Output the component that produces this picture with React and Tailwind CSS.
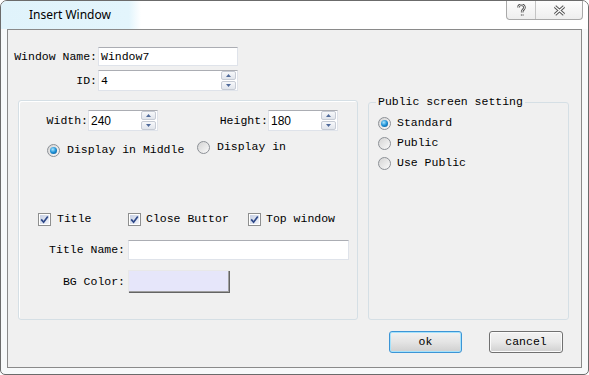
import React from "react";

const mono = "font-['Liberation_Mono','DejaVu_Sans_Mono',monospace] text-[11.5px] text-black";

const Field = ({ width, height = 19, children, className = "" }) => (
  <div
    className={`flex items-center bg-white border border-[#dfe3ea] border-t-[#abadb3] ${className}`}
    style={{ width, height }}
  >
    {children}
  </div>
);

const SpinArrow = ({ up }) => (
  <div className="flex-1 flex items-center justify-center border border-[#c6cbd4] rounded-[2px] bg-linear-to-b from-[#f7f8fa] to-[#e1e5ec]">
    <svg width="5" height="3" viewBox="0 0 5 3">
      <path d={up ? "M0 3 L2.5 0 L5 3 Z" : "M0 0 L5 0 L2.5 3 Z"} fill="#4f6a9a" />
    </svg>
  </div>
);

const SpinBox = ({ width, value, valueClass }) => (
  <Field width={width} height={21}>
    <span className={`flex-1 pl-[2px] ${valueClass}`}>{value}</span>
    <div className="flex flex-col w-[15px] h-[19px] mr-[1px] gap-[1px]">
      <SpinArrow up />
      <SpinArrow />
    </div>
  </Field>
);

const Radio = ({ checked }) => (
  <span className="flex items-center justify-center w-[13px] h-[13px] shrink-0 rounded-full border border-[#8c9096] bg-linear-to-br from-[#d4d4d4] to-[#fafafa]">
    {checked && (
      <span className="block w-[7px] h-[7px] rounded-full bg-[radial-gradient(circle_at_40%_35%,#a9e6ff,#1c8fd4_50%,#0b4c86)]" />
    )}
  </span>
);

const Check = () => (
  <span className="flex w-[13px] h-[13px] shrink-0 border border-[#8e8f8f] bg-white p-[1px]">
    <span className="flex flex-1 items-center justify-center bg-linear-to-br from-[#c6cfe3] to-[#f3f5fa]">
      <svg width="9" height="9" viewBox="0 0 9 9">
        <path d="M1.2 4.4 L3.6 7.2 L7.8 1.4" stroke="#2c4788" strokeWidth="1.7" fill="none" />
      </svg>
    </span>
  </span>
);

const App = () => {
  return (
    <div className="w-[589px] h-[375px] bg-white">
      <div className="flex flex-col w-full h-full border border-[#6b6b6b] rounded-t-[7px] rounded-b-[5px] bg-[#f7f9fa] overflow-hidden">
        {/* title bar */}
        <div className="flex justify-between h-[28px] bg-[linear-gradient(90deg,#e0f3fb_0px,#e3f5fc_128px,#ffffff_140px)]">
          <span className="self-center pl-[28px] font-['Noto_Sans','Open_Sans',sans-serif] text-[12px] text-black">
            Insert Window
          </span>
          <div className="flex self-start h-[19px] mr-[5px] border border-t-0 border-[#a9a9a9] rounded-b-[4px] bg-linear-to-b from-[#fdfdfd] to-[#eeeeee]">
            <div className="flex items-center justify-center w-[29px] border-r border-[#c4c4c4]">
              <svg width="9" height="13" viewBox="0 0 9 13">
                <path d="M1.5 3.5 C1.5 1.5 3 0.8 4.5 0.8 C6.3 0.8 7.5 2 7.5 3.6 C7.5 5.2 5.2 5.8 5.2 7.6 L5.2 8.6 M5.2 10.2 L5.2 11.8" stroke="#555" strokeWidth="2.6" fill="none" />
                <path d="M1.5 3.5 C1.5 1.5 3 0.8 4.5 0.8 C6.3 0.8 7.5 2 7.5 3.6 C7.5 5.2 5.2 5.8 5.2 7.6 L5.2 8.6 M5.2 10.2 L5.2 11.8" stroke="#fff" strokeWidth="1" fill="none" />
              </svg>
            </div>
            <div className="flex items-center justify-center w-[46px]">
              <svg width="13" height="11" viewBox="0 0 13 11">
                <path d="M2 1.5 L11 9.5 M11 1.5 L2 9.5" stroke="#555" strokeWidth="3.2" fill="none" />
                <path d="M2 1.5 L11 9.5 M11 1.5 L2 9.5" stroke="#fff" strokeWidth="1.2" fill="none" />
              </svg>
            </div>
          </div>
        </div>

        {/* client area */}
        <div className={`flex flex-col flex-1 mx-[6px] mb-[6px] border border-[#8a8a8a] bg-[#f0f0f0] ${mono}`}>
          <div className="flex items-center h-[19px] mt-[17px]">
            <span className="w-[90px] pr-[1px] text-right whitespace-nowrap">Window Name:</span>
            <Field width={140}>
              <span className="pl-[2px]">Window7</span>
            </Field>
          </div>
          <div className="flex items-center h-[21px] mt-[4px]">
            <span className="w-[90px] pr-[1px] text-right">ID:</span>
            <SpinBox width={140} value="4" />
          </div>

          <div className="flex items-start mt-[4px]">
            {/* left group */}
            <div className="flex flex-col w-[340px] h-[220px] ml-[10px] mt-[5px] border border-[#d5dfe5] rounded-[3px] shadow-[inset_1px_1px_0_#fff]">
              <div className="flex items-center h-[21px] mt-[9px]">
                <span className="w-[69px] text-right">Width:</span>
                <SpinBox width={70} value="240" valueClass="font-['Liberation_Sans',sans-serif] text-[12px]" />
                <span className="w-[110px] text-right">Height:</span>
                <SpinBox width={70} value="180" valueClass="font-['Liberation_Sans',sans-serif] text-[12px]" />
              </div>
              <div className="flex items-start mt-[8px]">
                <label className="flex items-center gap-[7px] w-[150px] h-[16px] ml-[28px] mt-[3px]">
                  <Radio checked />
                  <span>Display in Middle</span>
                </label>
                <label className="flex items-center gap-[7px] h-[16px]">
                  <Radio />
                  <span>Display in</span>
                </label>
              </div>
              <div className="flex items-center h-[16px] mt-[53px]">
                <label className="flex items-center gap-[6px] w-[90px] ml-[19px]">
                  <Check />
                  <span>Title</span>
                </label>
                <label className="flex items-center gap-[5px] w-[120px]">
                  <Check />
                  <span>Close Buttor</span>
                </label>
                <label className="flex items-center gap-[5px]">
                  <Check />
                  <span>Top window</span>
                </label>
              </div>
              <div className="flex items-center h-[20px] mt-[13px]">
                <span className="w-[109px] pr-[3px] text-right">Title Name:</span>
                <Field width={221} height={20} />
              </div>
              <div className="flex items-center h-[23px] mt-[10px]">
                <span className="w-[109px] pr-[3px] text-right">BG Color:</span>
                <div className="w-[102px] h-[23px] bg-[#e6e6fa] border-t border-l border-[#e8e8e8] shadow-[inset_-1px_-1px_0_#646464,inset_-2px_-2px_0_#a0a0a0]" />
              </div>
            </div>

            {/* right group */}
            <fieldset className="w-[201px] h-[225px] ml-[10px] border border-[#d5dfe5] rounded-[3px]">
              <legend className="ml-[7px] px-[2px] leading-[14px]">Public screen setting</legend>
              <div className="flex flex-col gap-[4px] mt-[6px] ml-[9px]">
                <label className="flex items-center gap-[6px] h-[16px]">
                  <Radio checked />
                  <span>Standard</span>
                </label>
                <label className="flex items-center gap-[6px] h-[16px]">
                  <Radio />
                  <span>Public</span>
                </label>
                <label className="flex items-center gap-[6px] h-[16px]">
                  <Radio />
                  <span>Use Public</span>
                </label>
              </div>
            </fieldset>
          </div>

          <div className="flex justify-end items-start gap-[27px] mt-[11px] pr-[18px]">
            <button className="w-[73px] h-[22px] rounded-[3px] border border-[#3c95d6] shadow-[inset_0_0_0_1px_#a6e2fb] bg-linear-to-b from-[#f2f2f2] via-[#e4e4e4] to-[#cfcfcf]">
              ok
            </button>
            <button className="w-[74px] h-[22px] rounded-[3px] border border-[#707070] shadow-[inset_0_0_0_1px_#fbfbfb] bg-linear-to-b from-[#f2f2f2] via-[#e9e9e9] to-[#d0d0d0]">
              cancel
            </button>
          </div>
        </div>
      </div>
    </div>
  );
};

export default App;
